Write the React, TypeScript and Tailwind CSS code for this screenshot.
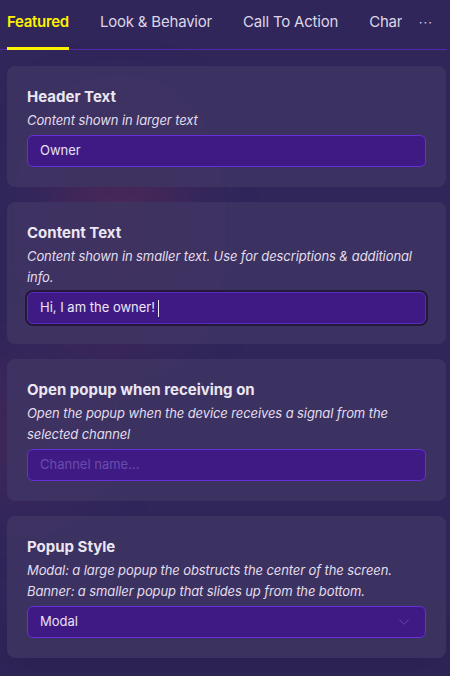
import { ChevronDown } from 'lucide-react';

const tabs = ['Featured', 'Look & Behavior', 'Call To Action'];

function Card({ title, desc, children }: { title: string; desc: string; children: React.ReactNode }) {
    return (
        <div className="rounded-lg bg-[#3e3462]/90 px-5 pt-5 pb-5">
            <div className="text-[15px] leading-[22px] font-bold text-[#ebe6f2]">{title}</div>
            <div className="text-[13px] leading-[21px] italic text-[#e3ddec] mt-[2px] tracking-[-0.1px]">{desc}</div>
            <div className="mt-[4px]">{children}</div>
        </div>
    );
}

export default function App() {
    return (
        <div
            className="relative w-[450px] h-[676px] overflow-hidden bg-[#30265a]"
            style={{ fontFamily: 'Inter, "Noto Sans", sans-serif' }}
        >
            {/* blurry background blobs */}
            <div className="absolute left-[70px] top-[120px] w-[100px] h-[220px] rounded-full bg-[#7a2a5a]/40 blur-2xl" />
            <div className="absolute left-[-40px] top-[360px] w-[120px] h-[140px] rounded-full bg-[#6a2a5a]/30 blur-2xl" />
            <div className="absolute left-0 bottom-0 w-[450px] h-[60px] bg-[#2a1f4d]/60 blur-md" />

            <div className="relative flex flex-col">
                {/* tab bar */}
                <div className="relative h-[50px] border-b border-[#5526b0] mr-[3px]">
                    <div className="flex items-center h-[44px] pl-[7px] gap-[31px] text-[15px] whitespace-nowrap">
                        {tabs.map((t, i) => (
                            <div
                                key={t}
                                className={
                                    i === 0
                                        ? 'font-semibold text-[#fff200] tracking-[-0.3px]'
                                        : 'text-[#dcd6e8] tracking-[-0.2px]'
                                }
                            >
                                {t}
                            </div>
                        ))}
                        <div className="w-[33px] overflow-hidden text-[#dcd6e8] tracking-[-0.2px]">Channels</div>
                    </div>
                    <div className="absolute right-[14px] top-[13px] text-[#cfc8e0] text-[13px] tracking-[1px]">···</div>
                    <div className="absolute left-[7px] bottom-[-1px] w-[62px] h-[3px] bg-[#fff200]" />
                </div>

                <div className="flex flex-col gap-[15px] pl-[7px] pr-[4px] pt-[16px]">
                    <Card title="Header Text" desc="Content shown in larger text">
                        <div className="h-[32px] rounded-md bg-[#3f1a84] border border-[#6530d6] px-3 flex items-center text-[13px] text-[#e8e0f5]">
                            Owner
                        </div>
                    </Card>

                    <Card
                        title="Content Text"
                        desc="Content shown in smaller text. Use for descriptions & additional info."
                    >
                        <div className="h-[32px] rounded-md bg-[#3f1a84] border border-[#5a2ac0] ring-2 ring-[#221a38] px-3 flex items-center text-[13px] text-[#ece6f7]">
                            Hi, I am the owner!
                            <span className="ml-[3px] w-px h-[17px] bg-[#f0ecf7]" />
                        </div>
                    </Card>

                    <Card
                        title="Open popup when receiving on"
                        desc="Open the popup when the device receives a signal from the selected channel"
                    >
                        <div className="h-[32px] rounded-md bg-[#3f1a84] border border-[#6530d6] px-3 flex items-center text-[13px] text-[#6a4cae]">
                            Channel name...
                        </div>
                    </Card>

                    <Card
                        title="Popup Style"
                        desc="Modal: a large popup the obstructs the center of the screen. Banner: a smaller popup that slides up from the bottom."
                    >
                        <div className="h-[32px] rounded-md bg-[#3f1a84] border border-[#6530d6] pl-3 pr-[12px] flex items-center justify-between text-[13px] text-[#e8e0f5]">
                            Modal
                            <ChevronDown size={18} strokeWidth={1} className="text-[#6f52b5]" />
                        </div>
                    </Card>
                </div>
            </div>
        </div>
    );
}
